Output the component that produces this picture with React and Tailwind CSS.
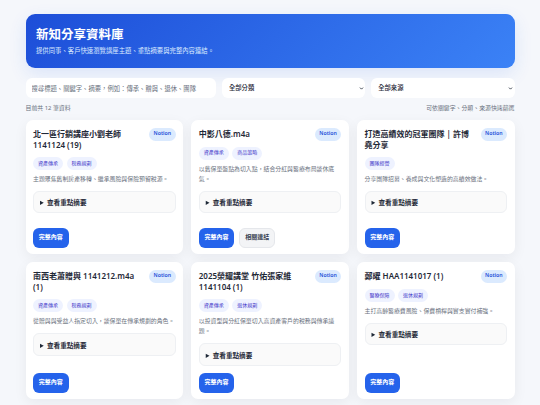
import React from "react";
import { ChevronDown } from "lucide-react";

const cards = [
  { title: "北一區行銷講座小劉老師 1141124 (19)", tags: ["資產傳承", "稅務規劃"], desc: "主題聚焦舊制房產移轉、繼承風險與保險預留稅源。" },
  { title: "中影八德.m4a", tags: ["資產傳承", "商品策略"], desc: "以舊保單盤點為切入點\uFF0C結合分紅與醫療布局談休底氣。", link: true },
  { title: "打造高績效的冠軍團隊 | 許博堯分享", tags: ["團隊經營"], desc: "分享團隊招募、養成與文化塑造的高績效做法。" },
  { title: "南西老蕭贈與 1141212.m4a (1)", tags: ["資產傳承", "稅務規劃"], desc: "從贈與與受益人指定切入\uFF0C談保單在傳承規劃的角色。" },
  { title: "2025榮耀講堂 竹佑張家維 1141104 (1)", tags: ["資產傳承", "退休規劃"], desc: "以投資型與分紅保單切入高資產客戶的稅務與傳承議題。" },
  { title: "鄭曜 HAA1141017 (1)", tags: ["醫療保障", "退休規劃"], desc: "主打高齡醫療費風險、保費槓桿與實支實付補強。" },
];

function Card({ c }) {
  return (
    <article className="flex min-h-[134px] flex-col rounded-[7px] bg-white px-[7.5px] pt-[7.5px] pb-[6.5px] shadow-[0_4px_14px_rgba(15,23,42,0.06)]">
      <div className="flex items-start justify-between gap-[6px]">
        <h2 className="text-[8px] leading-[11.7px] font-semibold text-[#1f2937]">{c.title}</h2>
        <span className="flex h-[13px] shrink-0 items-center rounded-full bg-[#dbeafe] px-[4.5px] text-[5.2px] font-semibold text-[#1d4ed8]">Notion</span>
      </div>
      <div className="mt-[6px] flex gap-[3.5px]">
        {c.tags.map((t) => (
          <span key={t} className="flex h-[13px] items-center rounded-full bg-[#eef2ff] px-[5px] text-[5px] text-[#4338ca]">{t}</span>
        ))}
      </div>
      <p className="mt-[4px] text-[5.9px] leading-[10px] text-[#6b7280]">{c.desc}</p>
      <details className="mt-[7px] h-[22.5px] rounded-[6px] border-[0.5px] border-[#eef0f3] bg-[#fafafa] px-[6px] py-[5.5px]">
        <summary className="text-[6.6px] leading-[11px] font-semibold text-[#1f2937]">查看重點摘要</summary>
      </details>
      <div className="mt-auto flex gap-[5px] pt-[7.5px]">
        <button className="h-[19.5px] w-[35.5px] rounded-[6px] bg-[#2563eb] text-[6px] font-semibold text-white">完整內容</button>
        {c.link && (
          <button className="h-[19.5px] w-[36px] rounded-[6px] border-[0.5px] border-[#e5e7eb] bg-[#f3f4f6] text-[6px] font-semibold text-[#374151]">相關連結</button>
        )}
      </div>
    </article>
  );
}

function Filter({ label }) {
  return (
    <div className="relative">
      <select className="block h-[20px] w-full appearance-none rounded-[6px] bg-white px-[7px] text-[6.3px] font-medium text-[#1f2937] outline-none">
        <option>{label}</option>
      </select>
      <ChevronDown className="pointer-events-none absolute top-[7.5px] right-[1.5px] h-[5px] w-[5px] text-[#1f2937]" strokeWidth={4} />
    </div>
  );
}

export default function App() {
  return (
    <div className="min-h-[405px] bg-[#f5f7fb] px-[25.5px] pt-[13.5px] pb-[4px] font-['Noto_Sans','Noto_Sans_CJK_TC',sans-serif]">
      <header className="flex h-[54px] flex-col justify-center gap-[2px] rounded-[9px] bg-[linear-gradient(135deg,#1d4ed8,#3b82f6)] pl-[10.5px] shadow-[0_6px_18px_rgba(37,99,235,0.12)]">
        <h1 className="text-[12.5px] leading-[18px] font-bold text-white">新知分享資料庫</h1>
        <p className="text-[6.36px] leading-[10px] text-[#dbeafe]">提供同事、客戶快速瀏覽講座主題、重點摘要與完整內容連結。</p>
      </header>

      <div className="mt-[10.5px] grid grid-cols-[190.5px_1fr_1fr] gap-[6px]">
        <input
          className="block h-[20px] rounded-[6px] bg-white px-[6px] text-[6.33px] outline-none placeholder:text-[#6b7280]"
          placeholder={"搜尋標題、關鍵字、摘要\uFF0C例如\uFF1A傳承、贈與、退休、團隊"}
        />
        <Filter label="全部分類" />
        <Filter label="全部來源" />
      </div>

      <div className="mt-[5px] flex h-[10px] items-center justify-between text-[5.9px] text-[#6b7280]">
        <span>目前共 12 筆資料</span>
        <span>可依關鍵字、分類、來源快速篩選</span>
      </div>

      <main className="mt-[7px] grid grid-cols-3 gap-[8.25px]">
        {cards.map((c) => (
          <Card key={c.title} c={c} />
        ))}
      </main>
    </div>
  );
}
